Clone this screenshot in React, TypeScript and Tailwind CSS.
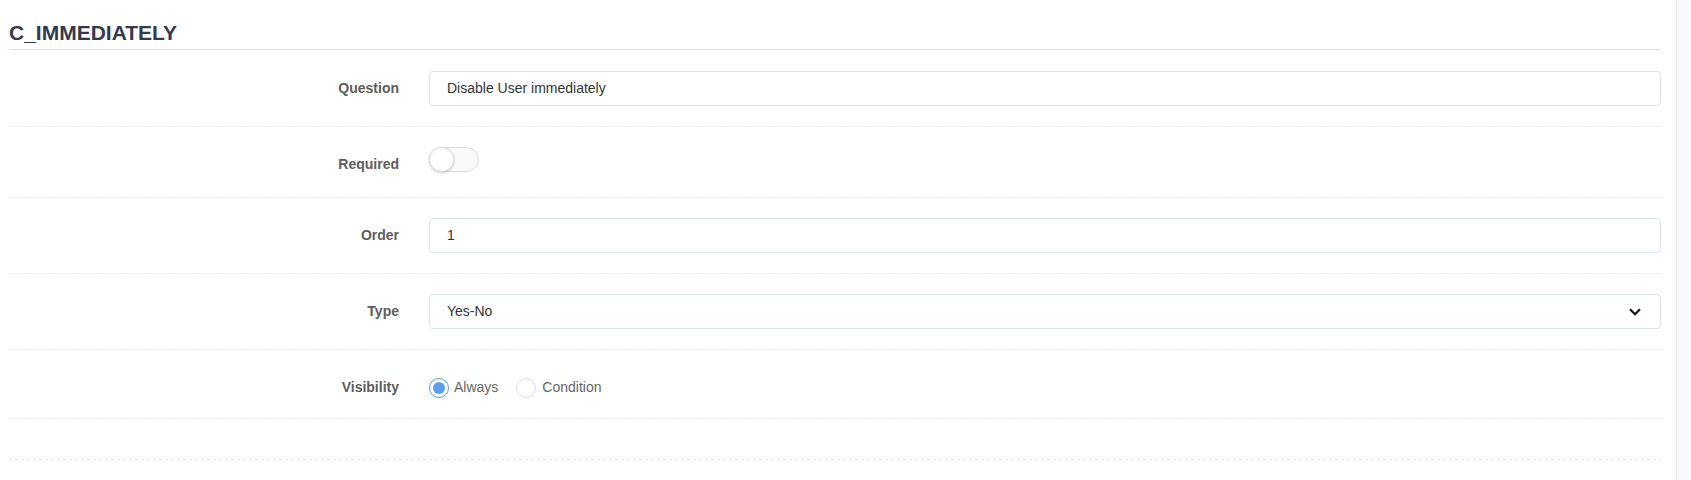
import React from "react";

const font = { fontFamily: '"Liberation Sans", Arial, sans-serif' };

function Sep({ long }: { long?: boolean }) {
  return long ? (
    <div className="h-px w-full bg-[repeating-linear-gradient(to_right,#e6e6e6_0px,#e6e6e6_3px,transparent_3px,transparent_6px)]" />
  ) : (
    <div className="h-px w-full bg-[repeating-linear-gradient(to_right,#e8e8e8_0px,#e8e8e8_2px,transparent_2px,transparent_3px)]" />
  );
}

function Label({ children }: { children: React.ReactNode }) {
  return (
    <div className="w-[390px] shrink-0 h-[35px] flex items-center justify-end text-[14px] font-bold text-[#5d5d5d]">
      {children}
    </div>
  );
}

function Row({ label, children, pt = "pt-[20px]", pb = "pb-[20px]" }: { label: string; children: React.ReactNode; pt?: string; pb?: string }) {
  return (
    <>
      <div className={`flex items-start gap-[30px] ${pt} ${pb}`}>
        <Label>{label}</Label>
        <div className="flex-1">{children}</div>
      </div>
      <Sep />
    </>
  );
}

function Input({ value }: { value: string }) {
  return (
    <div className="h-[35px] w-full border border-[#dce5e8] rounded-[4px] flex items-center pl-[17px] text-[14px] text-[#333]">
      {value}
    </div>
  );
}

export default function App() {
  return (
    <div className="flex w-[1691px] h-[480px] bg-white" style={font}>
      <div className="w-[1677px] shrink-0 border-r border-[#e2e2e2] pl-[9px] pr-[15px]">
        <div className="pt-[21px] pb-[4px] border-b border-[#e3e3e3]">
          <div className="text-[21px] leading-[24px] font-bold text-[#343a4e]">C_IMMEDIATELY</div>
        </div>
        <Row label="Question" pt="pt-[21px]">
          <Input value="Disable User immediately" />
        </Row>
        <Row label="Required" pb="pb-[15px]">
          <div className="w-[50px] h-[25px] rounded-full border border-[#dedede] bg-[#fafafa] relative">
            <div className="absolute left-[-1px] top-[-1px] w-[25px] h-[25px] rounded-full bg-white border border-[#e0e0e0] shadow-[0_1px_3px_rgba(0,0,0,0.2)]" />
          </div>
        </Row>
        <Row label="Order">
          <Input value="1" />
        </Row>
        <Row label="Type">
          <div className="h-[35px] w-full border border-[#dce5e8] rounded-[4px] flex items-center justify-between pl-[17px] pr-[19px] text-[14px] text-[#333]">
            <span>Yes-No</span>
            <svg width="12" height="8" viewBox="0 0 12 8" fill="none">
              <path d="M1 1.2L6 6.2L11 1.2" stroke="#111" strokeWidth="2.2" />
            </svg>
          </div>
        </Row>
        <Row label="Visibility" pb="pb-[13px]">
          <div className="h-[35px] flex items-center text-[14px] text-[#666]">
            <div className="w-[20px] h-[20px] rounded-full border border-[#5a9ce9] flex items-center justify-center">
              <div className="w-[12px] h-[12px] rounded-full bg-[#5c9def]" />
            </div>
            <span className="ml-[5px]">Always</span>
            <div className="ml-[18px] w-[20px] h-[20px] rounded-full border border-[#dcdcdc]" />
            <span className="ml-[6px]">Condition</span>
          </div>
        </Row>
        <div className="h-[40px]" />
        <Sep long />
      </div>
      <div className="flex-1 bg-[#f8f9fc]" />
    </div>
  );
}
